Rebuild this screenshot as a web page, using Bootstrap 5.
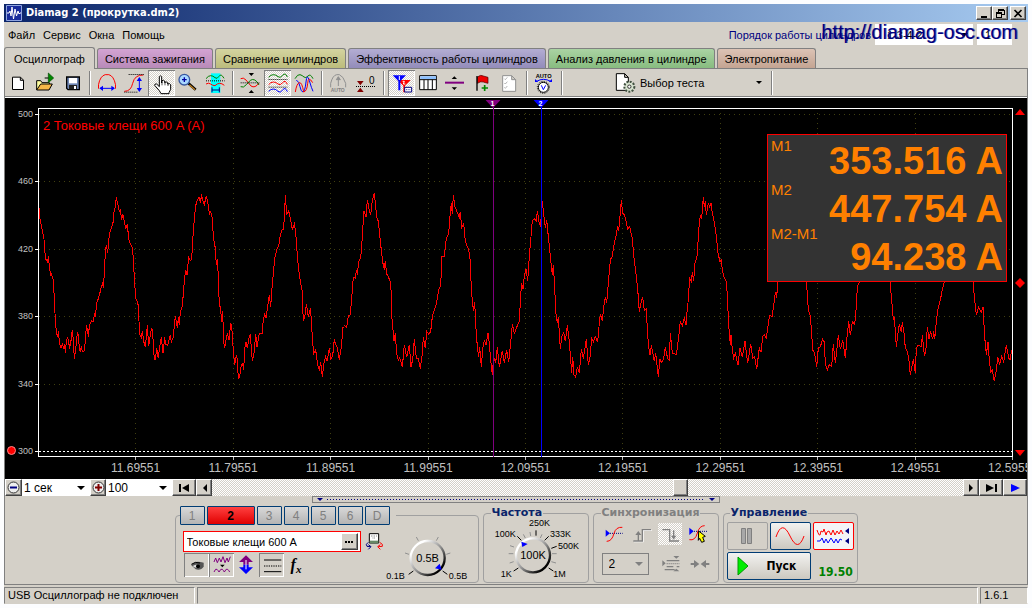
<!DOCTYPE html>
<html lang="ru">
<head>
<meta charset="utf-8">
<meta name="viewport" content="width=device-width, initial-scale=1">
<title>Diamag 2 (прокрутка.dm2)</title>
<link href="https://cdn.jsdelivr.net/npm/bootstrap@5.3.0/dist/css/bootstrap.min.css" rel="stylesheet">
<style>
:root{--face:#d4d0c8;--edge:#808080;--navy:#000080;--frame:#003c74}
body{background:#fcfdff;font-family:"Liberation Sans",Arial,sans-serif;font-size:12px;line-height:14px;color:#000}
button,select,input{font:inherit;color:inherit;border-radius:0}
svg{display:block;flex:none}
.pix{shape-rendering:crispEdges}
.app{min-height:calc(100vh - 8px);background:var(--face)}
.dither{background:repeating-conic-gradient(#fff 0 25%,var(--face) 0 50%) 0 0/2px 2px}
.raised{background:var(--face);border:1px solid;border-color:#fff #404040 #404040 #fff;box-shadow:inset -1px -1px var(--edge);padding:0;display:flex;align-items:center;justify-content:center}
/* title */
.titlebar{height:18px;padding:0 2px;background:linear-gradient(90deg,#0a246a,#a6caf0);color:#fff}
.titlebar h1{font:bold 11px/18px "DejaVu Sans Condensed","DejaVu Sans",sans-serif}
.winbtn{width:16px;height:14px}
/* menu */
.menubar{height:25px;font-size:11px}
.menubar a{color:#000;text-decoration:none}
.order{color:var(--navy)}
.sel{appearance:none;border:0;background:#fff url("data:image/svg+xml,%3Csvg xmlns='http://www.w3.org/2000/svg' width='8' height='4'%3E%3Cpath d='M0 0h8L4 4z'/%3E%3C/svg%3E") no-repeat right 5px center;padding:0 14px 0 2px}
.order .sel{width:98px;height:21px;padding-left:12px;color:#000}
.order .spin{width:35px;height:21px;border:0;background:#fff;color:#000;padding:0 8px}
.watermark{right:10px;top:17px;font-size:20px;line-height:22px;color:var(--navy);text-shadow:1px 0 #00008080;pointer-events:none}
/* tabs */
.tabs{height:22px;gap:2px;border-bottom:1px solid var(--edge);font-size:11px}
.tabs button{height:20px;border:1px solid var(--edge);border-bottom:0;border-radius:3px 3px 0 0;padding:0 7px;white-space:nowrap}
.tabs .cur{height:22px;margin-bottom:-1px;padding:0 9px;background:var(--face)}
.t-ign{background:linear-gradient(#d3a3d3,#b88ab8)}
.t-cmp{background:linear-gradient(#d4d4a0,#bcbc7c)}
.t-eff{background:linear-gradient(#b3add3,#938cba)}
.t-prs{background:linear-gradient(#aad3a3,#88bc80)}
.t-pwr{background:linear-gradient(#dcc3b5,#c4a492)}
.body-edge{border-left:1px solid var(--edge);border-right:1px solid var(--edge);border-bottom:1px solid var(--edge)}
/* toolbar */
.tools{height:29px;border-bottom:1px solid #fff;box-shadow:inset 0 -1px var(--edge)}
.tool{width:27px;height:26px;border:0;padding:0;background:none}
.pressed{background:repeating-conic-gradient(#fff 0 25%,var(--face) 0 50%) 0 0/2px 2px;box-shadow:inset 1px 1px var(--edge),inset -1px -1px #fff}
.vsep{width:2px;height:24px;margin:0 3px;border-left:1px solid var(--edge);border-right:1px solid #fff}
.pick{width:154px;border:0;background:none;padding:0 6px 0 0;font-size:11px}
/* chart */
.chart{background:#000;display:grid;grid-template:10px minmax(200px,1fr) 22px/33px 1fr 14px;min-height:380px;overflow:hidden}
.ylab{grid-area:2/1;font-size:9px;line-height:12px;color:#c0c0c0;padding-right:5px}
.ylab svg{margin-right:2px}
.plot{grid-area:2/2;border:1px solid #fff}
.plot>svg{position:absolute;inset:-1px;width:calc(100% + 2px);height:calc(100% + 2px);overflow:visible}
.plot svg *{vector-effect:non-scaling-stroke}
.xlab{grid-area:3/2;color:#c0c0c0;padding-top:4px}
.xlab span{flex:1 1 0;text-align:right}
.xlab b{display:inline-block;font-weight:400;transform:translateX(50%)}
.flags{grid-area:1/2}
.flags svg{position:absolute;bottom:0;transform:translateX(-50%)}
.series{color:#f00;font-size:13px;padding:10px 4px}
.readout{right:5px;top:25px;width:240px;height:148px;background:#333;border:1px solid #f00;color:#ff8000}
.r-names{padding-left:3px}
.r-names div{height:44px;font-size:15px;line-height:22px}
.r-vals{right:3px}
.r-vals div{height:48px;font-size:38px;font-weight:700;line-height:52px;text-align:right}
.limits{grid-area:2/3;padding:1px 0}
/* navigation */
.nav-row{height:17px;background:#fff}
.nav-row .raised{height:17px}
.range{appearance:none;height:17px;min-width:60px;margin:0}
.range::-webkit-slider-thumb{appearance:none;width:15px;height:17px;background:var(--face);border:1px solid;border-color:#fff #404040 #404040 #fff;box-shadow:inset -1px -1px var(--edge)}
.grip{width:408px;height:7px;border:1px solid var(--edge)}
.grip i{height:1px;background:repeating-linear-gradient(90deg,var(--navy) 0 1px,transparent 1px 3px)}
/* panels */
.panels{height:81px;gap:4px;padding-top:3px}
.box{min-width:0;height:77px;border:1px solid #a0a0a0;border-radius:4px;padding:0 4px;margin:0}
.box.named{height:76px;margin-top:1px}
.box legend{float:none;width:auto;margin:0 0 0 3px;padding:0 1px;font:bold 11px/12px "DejaVu Sans",sans-serif;color:#0a246a}
.box legend.chs{margin:0;padding:0 6px 0 0;font:12px/14px "Liberation Sans",sans-serif;display:flex;gap:2px}
.chs button{width:25px;height:19px;border:1px solid var(--frame);padding:0;background:linear-gradient(#d8d8d8,#b4b4b4);color:#808080;border-radius:1px}
.chs .on{width:48px;background:linear-gradient(#ff4040,#e00000);color:#000;font-weight:700}
.probe{width:178px;height:21px;border:1px solid #f00;background:#fff;font-size:11px}
.probe input{border:0;background:none;width:157px;padding:0 3px}
.probe .raised{width:17px;height:17px}
.mini{width:25px;height:24px;border:0;background:none;padding:0}
.fx{font:italic bold 16px/16px "Liberation Serif",serif}
.fx sub{font-size:11px}
.cmd{border:1px solid var(--frame);border-radius:2px;background:linear-gradient(#f2f2f0,#ccc8c0);padding:0;height:28px;width:41px;display:flex;align-items:center;justify-content:center}
.cmd:disabled{border-color:#a0a0a0;background:var(--face)}
.cmd.live{border-color:#f00;background:#f4f4f6}
.go{width:84px;font:bold 12px/14px "DejaVu Sans Condensed","DejaVu Sans",sans-serif;justify-content:flex-start;gap:18px;padding-left:9px}
.volt{font:bold 12px/14px "DejaVu Sans Condensed","DejaVu Sans",sans-serif;color:#008000;padding-top:12px}
.dim{width:47px;height:22px;border:1px solid var(--edge);background-color:var(--face);color:#000;opacity:1;padding-left:6px;background-image:url("data:image/svg+xml,%3Csvg xmlns='http://www.w3.org/2000/svg' width='8' height='4'%3E%3Cpath fill='gray' d='M0 0h8L4 4z'/%3E%3C/svg%3E")}
/* status */
.status{height:17px;margin-top:2px;gap:2px;font-size:11px;line-height:15px}
.status>div{border:1px solid;border-color:var(--edge) #fff transparent var(--edge);padding-left:3px;white-space:nowrap}
.lefty{width:191px}.ver{width:48px}
</style>
</head>
<body class="p-1">
<div class="app d-flex flex-column position-relative">
<header class="titlebar d-flex align-items-center">
  <svg width="16" height="16" viewBox="0 0 16 16"><path fill="#182c9c" stroke="#8fa4e0" d="M.5.5h15v15H.5z"/><path fill="none" stroke="#fff" d="M1 8h2l1-2 1 5 1-9 1.500 12L9 4l1.500 7L12 6l1 3 1-1h1"/></svg>
  <h1 class="my-0 ms-1 flex-grow-1">Diamag 2 (прокрутка.dm2)</h1>
  <button class="raised winbtn" aria-label="Свернуть"><svg class="pix" width="10" height="9"><path d="M2 7h6v2H2z"/></svg></button>
  <button class="raised winbtn" aria-label="Восстановить"><svg class="pix" width="10" height="9" fill="none" stroke="#000"><path d="M3 .5h6M3 1.500h6v4H7M3.500 1v2M1 3.500h6M1 4.500h5.500v4h-5v-5"/></svg></button>
  <button class="raised winbtn" style="margin-left:2px" aria-label="Закрыть"><svg width="10" height="9"><path stroke="#000" stroke-width="1.600" d="M1.500 1l7 7M8.500 1l-7 7"/></svg></button>
</header>
<nav class="menubar d-flex align-items-center">
  <a class="ms-1 me-2" href="#">Файл</a><a class="me-2" href="#">Сервис</a><a class="me-2" href="#">Окна</a><a href="#">Помощь</a>
  <div class="order ms-auto d-flex align-items-center gap-1 me-3">
    <label for="ord">Порядок работы цилиндров</label>
    <select id="ord" class="sel"><option>1-3-4-2</option></select>
    <input class="spin" value="1" aria-label="Цилиндр">
  </div>
</nav>
<div class="watermark position-absolute">http://diamag-osc.com</div>
<div class="tabs d-flex align-items-end" role="tablist">
  <button class="cur" role="tab" aria-selected="true">Осциллограф</button>
  <button class="t-ign" role="tab">Система зажигания</button>
  <button class="t-cmp" role="tab">Сравнение цилиндров</button>
  <button class="t-eff" role="tab">Эффективность работы цилиндров</button>
  <button class="t-prs" role="tab">Анализ давления в цилиндре</button>
  <button class="t-pwr" role="tab">Электропитание</button>
</div>
<main class="body-edge d-flex flex-column flex-grow-1">
<div class="tools d-flex align-items-center">
  <button class="tool" aria-label="Новый"><svg width="27" height="26" viewBox="15 210 81 78"><path fill="#fff" stroke="#000" stroke-width="3" d="M37.500 231.500h24l9 9v28h-33zM61 232v9h9"/></svg></button>
  <button class="tool" aria-label="Открыть"><svg width="27" height="26" viewBox="96 210 81 78"><path fill="#ffffa0" stroke="#000" stroke-width="3" d="M110 270v-28h12l4 6h22v8"/><path fill="#f4b848" stroke="#000" stroke-width="3" d="M110 270l12-18h35l-10 18z"/><path fill="#080" stroke="#040" stroke-width="2" d="M145 219l16 15-16 14z"/><path stroke="#000" stroke-width="3" d="M134 234h11"/></svg></button>
  <button class="tool" aria-label="Сохранить"><svg width="27" height="26" viewBox="174 210 81 78"><path fill="#6f86b4" stroke="#000" stroke-width="4" d="M197 231h38v38h-34l-4-4z"/><path fill="#fff" d="M204 234h24v16h-24z"/><path fill="#222" d="M204 255h24v13h-24z"/><path fill="#fff" d="M219 258h6v9h-6z"/></svg></button>
  <span class="vsep"></span>
  <button class="tool" aria-label="Развёртка"><svg width="27" height="26" viewBox="282 210 81 78" fill="none" stroke-width="3"><path stroke="#f00" d="M295.500 266v-12q5-26 20-30h11q15 4 20 30v12"/><path stroke="#00f" d="M300 265h42"/><path fill="#00f" d="M298 265l11-8v16zM345 265l-11-8v16z"/></svg></button>
  <button class="tool" aria-label="Размах"><svg width="27" height="26" viewBox="363 210 81 78" fill="none" stroke-width="3"><path stroke="#f00" d="M373 274q20 0 25-24q6-26 32-25"/><path stroke="#000" stroke-dasharray="3 3" d="M386 223.500h46M373 276.500h40"/><path stroke="#00f" d="M418 236v36"/><path fill="#00f" d="M418 231l-8 12h16zM418 276l-8-12h16z"/></svg></button>
  <button class="tool pressed" aria-label="Рука"><svg width="27" height="26" viewBox="444 210 81 78"><path fill="#fff" stroke="#000" stroke-width="3" d="M478 260v-30q4-5 7 0v19l1-7q5-3 8 1v5q4-5 9 0v4q7-3 9 2v14l-5 10v3h-24l-5-9-14-16q0-6 6-4z"/><path stroke="#000" stroke-width="2" d="M486 246v10M495 246v10M504 250v8"/></svg></button>
  <button class="tool" aria-label="Лупа"><svg width="27" height="26" viewBox="525 210 81 78"><path stroke="#000" stroke-width="8" d="M565 250l22 19"/><path stroke="#c08020" stroke-width="4" d="M568 254l17 15"/><circle cx="553" cy="239" r="16" fill="#a8d8ff" stroke="#3858a0" stroke-width="4"/><path stroke="#0000a0" stroke-width="4" d="M546 239h14M553 232v14"/></svg></button>
  <button class="tool" aria-label="Фрагмент"><svg width="27" height="26" viewBox="606 210 81 78" fill="none" stroke-width="3"><path fill="#0ff" d="M633 220h28v59h-28z"/><path stroke="#008000" d="M618 236q7-9 14-9t13 6t12-4t15 6"/><path stroke="#000" stroke-dasharray="3 3" d="M618 242.500h56"/><path stroke="#f00" d="M618 252q8-5 14 0t13 5q7-7 14-7t14 6"/><path stroke="#000080" d="M636 262v15M658 262v15M636 270h22"/></svg></button>
  <span class="vsep"></span>
  <button class="tool" aria-label="Центр"><svg width="27" height="26" viewBox="711 210 81 78" fill="none" stroke-width="3"><path stroke="#f00" d="M722 236q8-5 16 4l15 18q12 8 24-9"/><path stroke="#008000" d="M722 260q8 5 17-6l12-13q14-9 26 14"/><path stroke="#000" stroke-dasharray="3 3" d="M722 248.500h56"/><path fill="#000" d="M746 219h16l-8 9zM746 279h16l-8-9z"/></svg></button>
  <button class="tool pressed" aria-label="Раздельно"><svg width="27" height="26" viewBox="792 210 81 78" fill="none" stroke-width="3"><path stroke="#008000" d="M806 232q6-8 14-8t14 6t14-4t14 5"/><path stroke="#f00" d="M806 254q6-8 14-8t14 6t14-4t14 5"/><path stroke="#00f" d="M806 274q6-7 14-7t14 7t14-4t14 5"/><path stroke="#000" stroke-dasharray="3 3" d="M806 238.500h56M806 261.500h56"/></svg></button>
  <button class="tool" aria-label="Наложение"><svg width="27" height="26" viewBox="873 210 81 78" fill="none" stroke-width="3"><path stroke="#008000" d="M885 236q8-14 15-12t12 7t12-3t15 8"/><path stroke="#00f" d="M889 240q8 4 11 20t9 16q6-2 9-30t10-4t11 32"/><path stroke="#f00" d="M886 276q4-26 12-28t13 28q10-2 12-26t15-2"/></svg></button>
  <span class="vsep"></span>
  <button class="tool" disabled aria-label="Авто"><svg width="27" height="26" viewBox="978 210 81 78" fill="none" stroke="#909090" stroke-width="3"><path d="M992 262v-12q6-24 18-26h8q12 4 19 26v12M1015 232v26"/><path fill="#909090" d="M1015 230l-6 9h12z"/><text x="992" y="277" font-size="15" font-weight="700" fill="#808080" stroke="none">AUTO</text></svg></button>
  <button class="tool" aria-label="Ноль"><svg width="27" height="26" viewBox="27 210 81 78"><path stroke="#000" stroke-width="3" stroke-dasharray="3 3" d="M36 259.500h58"/><path fill="#800000" d="M39 243h20l-10 13zM39 276h20l-10-13z"/><text x="75" y="251" font-size="30">0</text></svg></button>
  <span class="vsep"></span>
  <button class="tool pressed" aria-label="Маркеры"><svg width="27" height="26" viewBox="132 210 81 78"><path fill="red" d="M160 240h40l-17 17v20h-5v-20z"/><path fill="#00f" d="M146 226h40l-17 17v28h-6v-28z"/><path stroke="#fff" stroke-width="3" fill="none" d="M166 228v12M176 244h5l-3 8h6"/><path fill="#fff" stroke="#000080" stroke-width="3" d="M182 262h21v14h-21z"/><path stroke="#000080" stroke-width="2" stroke-dasharray="3 2" d="M186 269h14"/></svg></button>
  <button class="tool" aria-label="Таблица"><svg width="27" height="26" viewBox="213 210 81 78"><path fill="#fff" stroke="#000" stroke-width="3" d="M227 227h50v42h-50zM227 239h50M240 239v30M252 239v30M265 239v30"/><path fill="#8cc0ff" d="M229 229h47v8h-47z"/></svg></button>
  <button class="tool" aria-label="Линейка"><svg width="27" height="26" viewBox="294 210 81 78"><path stroke="#800080" stroke-width="6" d="M303 248h57"/><path d="M331 229l8 8h-16zM331 270l8-8h-16z"/></svg></button>
  <button class="tool" aria-label="Флаг"><svg width="27" height="26" viewBox="375 210 81 78"><path fill="#e00" stroke="#400" stroke-width="2" d="M400 231q10-8 18-3l14 4v18q-8-2-14-4-8-3-18 4z"/><path stroke="#000" stroke-width="4" d="M399 228v44"/><path stroke="#080" stroke-width="5" d="M413 264h19M422 255v18"/></svg></button>
  <button class="tool" aria-label="Отчёт"><svg width="27" height="26" viewBox="456 210 81 78" fill="none" stroke="#909090" stroke-width="3"><path fill="#fff" d="M476 227h27l12 12v35h-39zM503 227v12h12"/><path stroke-width="2" d="M481 236l3 3 6-7M481 249l3 3 6-7M481 262l3 3 6-7"/></svg></button>
  <span class="vsep"></span>
  <button class="tool" aria-label="Автоизмерение"><svg width="27" height="26" viewBox="561 210 81 78" fill="none" stroke="#000" stroke-width="3"><text x="575" y="234" font-size="17" font-weight="700" fill="#000" stroke="none">AUTO</text><circle cx="598" cy="262" r="15" fill="#fff"/><circle cx="598" cy="262" r="18" stroke-dasharray="3 4"/><path stroke="#00f" d="M592 256l6 13 7-13M578 244q20-12 42 0"/><path fill="#00f" stroke="none" d="M573 237v9h10zM624 237v9h-10z"/></svg></button>
  <span class="vsep"></span>
  <button class="pick d-flex align-items-center ms-5" type="button"><svg width="26" height="26" viewBox="811 210 78 78"><path fill="#fff" stroke="#000" stroke-width="3" d="M818 221h25l11 11v39h-36zM843 221v11h11"/><circle cx="857" cy="260" r="15" fill="#d8e4d0" stroke="#405040" stroke-width="6" stroke-dasharray="6 4"/><circle cx="857" cy="260" r="5" fill="#fff" stroke="#333" stroke-width="3"/></svg><span>Выбор теста</span><svg class="ms-auto" width="7" height="4"><path d="M1 0h6L4 3z"/></svg></button>
  <span class="vsep"></span>
</div>

<section class="chart flex-grow-1 position-relative" aria-label="Осциллограмма">
  <div class="flags position-relative">
    <svg style="left:46.700%" width="15" height="8"><path fill="#800080" d="M0 0h15L7.500 8z"/><text x="5" y="6" font-size="7" font-weight="700" fill="#fff">1</text></svg>
    <svg style="left:51.600%" width="15" height="8"><path fill="#00f" d="M0 0h15L7.500 8z"/><text x="5" y="6" font-size="7" font-weight="700" fill="#fff">2</text></svg>
  </div>
  <div class="ylab d-flex flex-column justify-content-between align-items-end">
    <span>500</span><span>460</span><span>420</span><span>380</span><span>340</span>
    <span class="d-flex align-items-center"><svg width="9" height="9"><circle cx="4.500" cy="4.500" r="4" fill="red" stroke="#f88"/></svg>300</span>
  </div>
  <div class="plot position-relative">
    <svg class="pix" viewBox="114 324 2925 1047" preserveAspectRatio="none" fill="none">
      <g stroke="#404010" stroke-dasharray="1 4"><path d="M117 343H3036M117 544H3036M117 748H3036M117 949H3036M117 1153H3036"/><path d="M406 340V1366M700 340V1366M991 340V1366M1285 340V1366M1576 340V1366M1867 340V1366M2161 340V1366M2452 340V1366M2746 340V1366"/></g>
      <path stroke="#fff" stroke-dasharray="2 2" d="M117 1354H3036"/>
      <path stroke="#fff" d="M106 343h9M106 544h9M106 748h9M106 949h9M106 1153h9M106 1354h9"/>
      <path stroke="#c0c0c0" d="M406 1371v9M700 1371v9M991 1371v9M1285 1371v9M1576 1371v9M1867 1371v9M2161 1371v9M2452 1371v9M2746 1371v9M3037 1371v9"/>
      <g stroke="#f00">
      <polyline transform="translate(0 420)" points="117,203 119,232 122,248 125,262 129,282 132,298 134,330 137,358 140,360 143,370 145,348 149,388 152,406 155,402 157,414 160,418 161,458 164,460 165,520 167,555 169,575 173,592 175,573 178,602 181,622 185,622 187,608 190,624 194,612 196,640 199,604 202,592 206,600 208,626 212,612 214,592 217,570 220,600 223,658 226,632 229,612 232,576 236,590 238,632 241,634 244,618 247,636 252,634 254,618 256,606 259,556 262,568 265,590 268,558 270,552 275,543 279,545 284,520 286,532 290,488 293,482 299,462 304,440 308,430 310,443 313,400 316,336 319,316 323,340 328,282 335,262 340,244 342,216 346,200 349,172 354,196 358,214 361,210 365,240 368,222 373,244 377,268 382,252 386,296 391,312 397,322 400,355 402,396 405,443 407,476 412,484 415,498 417,544 419,584 424,592 427,573 431,604 436,620 439,590 442,556 446,618 450,590 454,566 457,570 460,610 463,660 466,658 470,625 475,655 479,620 484,592 489,640 494,592 497,614 503,616 507,600 511,586 514,606 519,594 523,560 526,528 532,564 535,532 538,556 541,516 546,500 550,464 553,420 557,391 561,404 566,352 571,362 575,358 578,308 580,268 584,232 586,200 591,184 597,172 602,190 604,163 609,184 613,193 619,168 625,196 628,222 632,214 637,236 640,290 646,325 649,374 652,358 655,410 658,498 662,500 664,545 668,514 671,606 674,625 677,604 682,580 687,600 692,552 695,556 698,604 701,644 704,674 709,646 712,658 715,718 719,708 724,676 728,672 731,690 734,626 738,606 742,624 748,590 751,582 754,625 757,664 762,640 767,582 771,622 778,580 786,582 790,540 794,520 798,535 803,500 808,464 812,500 816,446 820,400 824,355 830,330 836,318 841,285 846,270 850,268 853,236 856,166 860,222 866,213 871,234 877,268 883,252 887,276 890,320 895,382 900,418 906,450 908,510 911,542 915,524 919,492 925,530 931,505 934,540 937,594 941,640 947,630 953,674 958,688 962,666 967,710 972,668 977,650 981,664 988,625 993,658 998,648 1003,598 1007,614 1012,622 1018,660 1024,620 1029,562 1032,562"/>
      <polyline transform="translate(1032 420)" points="0,556 8,562 13,528 19,524 23,476 28,412 34,414 37,390 40,404 44,364 50,352 53,320 56,270 60,212 66,232 70,180 75,206 80,226 85,180 91,160 95,200 98,232 103,244 108,295 113,340 118,378 121,385 124,364 128,402 133,410 139,426 142,462 143,526 147,570 150,604 154,580 158,640 163,660 167,652 175,682 181,614 188,652 196,614 201,680 206,660 211,598 217,655 223,655 229,686 235,640 238,590 244,625 248,574 254,583 260,575 265,530 270,512 277,492 285,446 290,436 294,348 301,350 307,294 314,280 319,216 322,190 325,222 328,166 333,200 340,218 346,232 349,215 353,262 359,250 364,305 374,330 379,364 382,450 388,512 392,486 396,568 400,620 404,650 407,622 412,680 416,628 421,600 426,616 432,580 436,610 440,660 445,704 449,650 455,668 460,622 466,682 475,632 481,668 488,630 494,665 500,610 505,552 511,580 518,562 526,544 530,464 533,430 537,448 541,406 546,386 551,422 556,350 561,290 565,242 571,236 577,242 580,212 585,245 590,262 593,188 595,186 599,222 604,264 608,240 613,290 618,340 625,404 628,376 632,440 635,514 640,550 643,532 649,628 653,590 659,578 664,604 670,556 676,604 680,660 683,698 686,650 690,704 695,712 700,680 706,700 712,626 718,656 727,598 733,676 738,650 743,596 748,606 754,590 761,606 765,560 769,522 775,544 779,500 784,470 788,490 793,430 799,360 804,350 810,314 817,284 821,258 824,274 829,216 832,180 836,220 841,224 846,242 851,266 857,260 865,296 870,355 877,410 881,446 886,516 891,488 896,472 901,512 907,506 910,570 914,620 918,646 922,616 931,664 935,640 943,710 948,656 952,668 959,656 964,622 971,656 976,660 979,580 985,640 990,640 997,644 1003,600 1009,544 1015,556 1021,532 1026,556 1031,490"/>
      <polyline transform="translate(2064 360)" points="0,548 5,475 10,484 13,457 17,482 21,430 28,404 32,330 37,284 41,296 46,230 49,262 52,244 55,286 61,250 65,262 69,248 73,280 79,306 85,350 90,400 96,425 100,420 103,450 108,470 115,486 119,540 121,604 127,674 129,644 133,690 137,714 142,700 150,736 156,684 163,712 171,664 179,730 188,672 194,714 200,710 206,748 214,684 219,696 224,650 229,644 235,654 241,610 245,586 252,590 258,550 262,516 266,534 269,486 290,330 310,240 334,330 355,486 358,520 361,572 367,586 371,640 374,690 380,700 386,740 391,684 397,680 404,658 409,666 412,730 418,750 424,734 431,740 436,672 442,730 451,646 457,688 464,660 472,714 477,652 482,604 487,646 493,604 500,614 505,560 508,500 514,486 540,300 560,240 584,330 606,486 611,540 616,600 619,590 625,680 630,640 634,612 640,636 643,606 648,640 652,684 656,690 661,710 664,730 667,766 671,742 676,718 682,758 685,684 690,676 700,680 703,646 709,706 713,700 718,622 723,656 728,634 734,658 737,634 740,658 745,604 750,566 757,540 762,514 769,486 790,330 812,240 834,330 855,486 860,540 865,584 872,562 880,576 886,560 889,640 895,704 900,666 904,720 908,756 913,750 919,784 926,744 929,710 935,734 941,710 947,726 955,674 962,714 966,720 971,690"/>
      </g>
      <path stroke="#800080" d="M1480 318V1370"/><path stroke="#00f" d="M1624 318V1370"/>
    </svg>
    <div class="series position-relative">2 Токовые клещи 600 A (A)</div>
    <div class="readout position-absolute">
      <div class="r-names"><div>M1</div><div>M2</div><div>M2-M1</div></div>
      <div class="r-vals position-absolute top-0"><div>353.516 A</div><div>447.754 A</div><div>94.238 A</div></div>
    </div>
  </div>
  <div class="limits d-flex flex-column justify-content-between align-items-center">
    <svg width="10" height="7"><path fill="red" d="M5 0l5 6H0z"/></svg>
    <svg width="10" height="10"><path fill="red" d="M5 0l5 5-5 5-5-5z"/></svg>
    <svg width="10" height="7"><path fill="red" d="M5 7L0 1h10z"/></svg>
  </div>
  <div class="xlab d-flex">
    <span><b>11.69551</b></span><span><b>11.79551</b></span><span><b>11.89551</b></span><span><b>11.99551</b></span><span><b>12.09551</b></span><span><b>12.19551</b></span><span><b>12.29551</b></span><span><b>12.39551</b></span><span><b>12.49551</b></span><span><b>12.59551</b></span>
  </div>
</section>

<div class="nav-row d-flex">
  <button class="raised" style="width:17px" aria-label="Меньше"><svg width="13" height="13"><circle cx="6.500" cy="6.500" r="5.500" fill="#eee" stroke="#333"/><path fill="#000080" d="M3 5.500h7v2H3z"/></svg></button>
  <select class="sel" style="width:68px" aria-label="Время"><option>1 сек</option></select>
  <button class="raised" style="width:16px" aria-label="Больше"><svg width="13" height="13"><circle cx="6.500" cy="6.500" r="5.500" fill="#eee" stroke="#333"/><path fill="#800000" d="M3 5.500h2.500V3h2v2.500H10v2H7.500V10h-2V7.500H3z"/></svg></button>
  <select class="sel" style="width:66px" aria-label="Масштаб"><option>100</option></select>
  <button class="raised" style="width:24px" aria-label="В начало"><svg width="11" height="8"><path d="M0 0h2v8H0zM10 0v8L3 4z"/></svg></button>
  <button class="raised" style="width:16px" aria-label="Назад"><svg width="5" height="8"><path d="M5 0v8L1 4z"/></svg></button>
  <input class="range dither flex-grow-1" type="range" min="0" max="1000" value="626" aria-label="Прокрутка">
  <button class="raised" style="width:16px" aria-label="Вперёд"><svg width="5" height="8"><path d="M0 0v8l4-4z"/></svg></button>
  <button class="raised" style="width:24px" aria-label="В конец"><svg width="11" height="8"><path d="M9 0h2v8H9zM0 0v8l8-4z"/></svg></button>
  <button class="raised" style="width:24px" aria-label="Воспроизвести"><svg width="9" height="8"><path fill="#00f" d="M0 0v8l9-4z"/></svg></button>
</div>
<div class="grip mx-auto d-flex align-items-center px-1 gap-1"><svg width="6" height="4"><path fill="#000080" d="M0 0h6L3 3z"/></svg><i class="flex-grow-1"></i><svg width="6" height="4"><path fill="#000080" d="M0 0h6L3 3z"/></svg></div>

<section class="panels d-flex justify-content-center align-items-start">
  <fieldset class="box" style="width:304px">
    <legend class="chs"><button>1</button><button class="on">2</button><button>3</button><button>4</button><button>5</button><button>6</button><button>D</button></legend>
    <div class="d-flex">
      <div style="padding:6px 0 0 3px">
        <div class="d-flex align-items-center gap-1">
          <div class="probe d-flex align-items-center"><input value="Токовые клещи 600 A" aria-label="Датчик"><button class="raised" aria-label="Выбрать датчик"><svg width="9" height="2"><path d="M0 0h2v2H0zM3 0h2v2H3zM6 0h2v2H6z"/></svg></button></div>
          <svg width="20" height="20" viewBox="580 100 60 60"><path fill="#fff" stroke="#000" stroke-width="3" d="M593 105h28v28h-28z"/><path fill="#686" d="M594 126h26v8h-26z"/><path stroke="#000" stroke-width="2" stroke-dasharray="2 3" d="M598 112h20M603 118h8"/><path fill="none" stroke="#000080" stroke-width="3" d="M590 131q-10 6-4 12l10 1M590 138l8 6-8 8"/><path fill="none" stroke="red" stroke-width="3" d="M624 131q12 6 8 12l-12 1M626 138l-8 6 8 8"/></svg>
        </div>
        <div class="d-flex" style="padding:1px">
          <button class="mini pressed" aria-label="Показать"><svg width="25" height="24" viewBox="42 163 75 72"><path fill="#555" d="M64 200q8-14 28-10l9 2v12q-8 12-24 8z"/><path fill="#ddd" d="M68 202q8-6 20-4l-3 8q-10 4-17-4z"/><circle cx="84" cy="203" r="6"/><path fill="none" stroke="#000" stroke-width="3" d="M64 197q12-10 26-4"/></svg></button>
          <button class="mini pressed" aria-label="Сглаживание"><svg width="25" height="24" viewBox="117 163 75 72" fill="none" stroke="#800080" stroke-width="3"><path d="M132 190l5-12 5 14 6-14 5 12 6-16 6 18 6-14 4 12 6-16"/><path d="M132 220q5-12 9-8t6 8q6-12 10-8t6 8q6-12 10-8t6 8"/><path fill="#000" stroke="none" d="M150 198h14l-7 8z"/></svg></button>
          <button class="mini" aria-label="Инверсия"><svg width="25" height="24" viewBox="192 163 75 72"><path fill="#800080" d="M228 170l21 20h-13v8h-16v-8h-13z"/><path fill="#00f" d="M228 226l21-20h-13v-8h-16v8h-13z"/><path stroke="#fff" stroke-width="3" d="M228 184v28"/></svg></button>
          <button class="mini pressed" aria-label="Уровни"><svg width="25" height="24" viewBox="267 163 75 72"><path stroke="#000" stroke-width="3" d="M282 184h52M282 219h52"/><path stroke="#000" stroke-width="3" stroke-dasharray="4 3" d="M282 202h52"/></svg></button>
          <button class="mini fx">f<sub>x</sub></button>
        </div>
      </div>
      <svg class="mt-2" width="90" height="54" viewBox="20 124 270 162"><defs><linearGradient id="k" x1="0" y1="0" x2="1" y2="1"><stop offset=".2" stop-color="#fff"/><stop offset=".55" stop-color="#888"/><stop offset=".85"/></linearGradient></defs>
        <g stroke="#909090" stroke-width="3"><path d="M114 136l6 11M180 136l-6 11M80 184l12 4M216 184l-12 4"/></g><path stroke="#000" stroke-width="3" d="M91 248l14-10M207 248l-14-10"/>
        <circle cx="148" cy="199" r="51" fill="#d4d0c8" stroke="url(#k)" stroke-width="7"/><path fill="#00f" d="M184 216l6 18-20-4z"/>
        <text x="148" y="210" font-size="33" text-anchor="middle">0.5B</text><text x="24" y="263" font-size="27">0.1B</text><text x="211" y="263" font-size="27">0.5B</text></svg>
    </div>
  </fieldset>
  <fieldset class="box named" style="width:106px">
    <legend>Частота</legend>
    <svg width="96" height="64" viewBox="326 90 288 192"><g stroke="#909090" stroke-width="3"><path d="M388 194h14M391 222l12-4M392 170l12 4M432 136l6 11M452 129l2 12M488 136l-5 11M518 194h14M530 222l-14-4"/></g>
      <path stroke="#000" stroke-width="3" d="M470 124v16M414 142l12 12M508 142l-12 12M532 172l-16 6M403 246l14-9M522 246l-14-9"/>
      <circle cx="461" cy="199" r="51" fill="#d4d0c8" stroke="url(#k)" stroke-width="7"/><path fill="#00f" d="M426 158l19 7-16 9z"/>
      <g font-size="27"><text x="461" y="210" font-size="33" text-anchor="middle">100K</text><text x="449" y="112">250K</text><text x="346" y="144">100K</text><text x="512" y="144">333K</text><text x="536" y="180">500K</text><text x="364" y="263">1K</text><text x="522" y="263">1M</text></g></svg>
  </fieldset>
  <fieldset class="box named" style="width:126px" disabled>
    <legend style="color:#808080">Синхронизация</legend>
    <div class="d-flex justify-content-between" style="padding:4px 4px 0">
      <svg width="24" height="24" viewBox="36 70 72 72" fill="none" stroke-width="3"><path stroke="#000080" stroke-dasharray="3 3" d="M60 101h38"/><path fill="#00f" d="M47 90v21l13-10z"/><path stroke="#f00" d="M50 125q16 0 22-24q6-20 25-18"/></svg>
      <svg width="24" height="24" viewBox="124 70 72 72" fill="none" stroke="#808080" stroke-width="4"><path stroke="#fff" d="M136 126h27V92h26"/><path d="M134 124h27V90h26M149 122v-20"/><path fill="#808080" stroke="none" d="M149 94l-9 12h18z"/></svg>
      <svg class="dither" width="24" height="22" viewBox="207 72 72 66" fill="none" stroke="#808080" stroke-width="4"><path d="M220 92h22v34h28M254 94v22"/><path fill="#808080" stroke="none" d="M254 122l-8-12h16z"/></svg>
      <svg width="24" height="24" viewBox="290 70 72 72" fill="none" stroke-width="3"><path stroke="#f00" d="M300 120q18 4 24-20q6-22 22-22"/><path stroke="#000080" stroke-dasharray="3 3" d="M308 95h46"/><path fill="#00f" d="M300 84v22l13-11z"/><path fill="#ff0" stroke="#000" d="M328 94l20 16-8 3 5 12-8 3-6-12-4 6z"/></svg>
    </div>
    <div class="d-flex justify-content-between align-items-center" style="padding:6px 4px 0">
      <select class="sel dim" aria-label="Канал"><option>2</option></select>
      <svg class="ms-1" width="20" height="18" viewBox="215 160 60 54" fill="#808080" stroke="#808080" stroke-width="4"><path d="M219 176v18l10-9zM252 163h18l-9 8zM252 209h18l-9-8z" stroke="none"/><path d="M232 177h38M232 195h20M262 195h8M226 204h30"/><path stroke-dasharray="3 3" d="M232 186h38"/></svg>
      <svg width="20" height="14" viewBox="298 170 60 42" fill="#808080"><path d="M300 188h10v-9l16 12-16 12v-9h-10zM356 188h-10v-9l-16 12 16 12v-9h10z"/></svg>
    </div>
  </fieldset>
  <fieldset class="box named" style="width:135px;padding:0 3px">
    <legend>Управление</legend>
    <div class="d-flex" style="gap:2px;padding-top:3px">
      <button class="cmd" disabled aria-label="Пауза"><svg width="12" height="16"><path fill="#a8a8a8" stroke="#808080" d="M.5.500h4v15h-4zM6.500.5h4v15h-4z"/></svg></button>
      <button class="cmd" aria-label="Синусоида"><svg width="30" height="20"><path fill="none" stroke="red" d="M1 11Q7-7 15 10t14 0"/></svg></button>
      <button class="cmd live" aria-label="Каналы"><svg width="34" height="20" fill="none"><path stroke="red" d="M1 4q2 6 3 5l1-4 2 1 1-3 2 6 1-3 2-1 2 4 2-5 2 5 2-4 2 3 2-4 2 4"/><path stroke="#00f" d="M1 15h3l2-3 2 5 2-4 2 4 3-5 3 5 2-4 2 4 2-4 2 1"/><path fill="#000080" d="M33 2v6l-4-3zM33 12v6l-4-3z"/></svg></button>
    </div>
    <div class="d-flex align-items-center gap-2" style="padding-top:2px">
      <button class="cmd go"><svg width="12" height="20"><path fill="#0e0" stroke="#090" d="M1 1v18l10-9z"/></svg>Пуск</button>
      <span class="volt">19.50</span>
    </div>
  </fieldset>
</section>
</main>
<footer class="status d-flex">
  <div class="lefty">USB Осциллограф не подключен</div><div class="flex-grow-1"></div><div class="ver">1.6.1</div>
</footer>
</div>
<script src="https://cdn.jsdelivr.net/npm/bootstrap@5.3.0/dist/js/bootstrap.bundle.min.js"></script>
</body>
</html>
